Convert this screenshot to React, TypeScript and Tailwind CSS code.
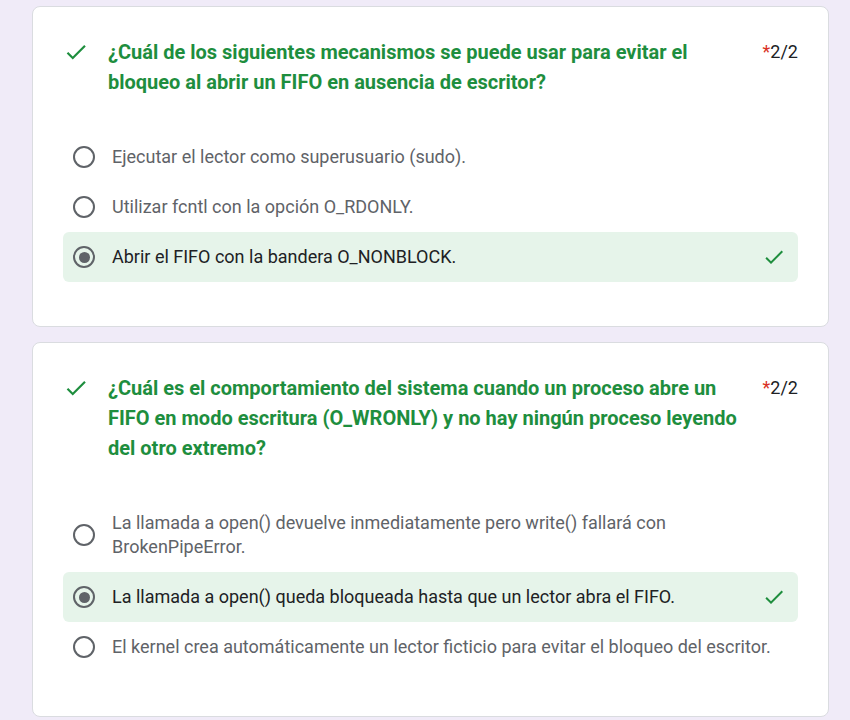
import type { ReactNode } from 'react'

type Option = { text: string; selected?: boolean }

type Question = {
  title: string
  options: Option[]
}

const QUESTIONS: Question[] = [
  {
    title: '¿Cuál de los siguientes mecanismos se puede usar para evitar el bloqueo al abrir un FIFO en ausencia de escritor?',
    options: [
      { text: 'Ejecutar el lector como superusuario (sudo).' },
      { text: 'Utilizar fcntl con la opción O_RDONLY.' },
      { text: 'Abrir el FIFO con la bandera O_NONBLOCK.', selected: true },
    ],
  },
  {
    title: '¿Cuál es el comportamiento del sistema cuando un proceso abre un FIFO en modo escritura (O_WRONLY) y no hay ningún proceso leyendo del otro extremo?',
    options: [
      { text: 'La llamada a open() devuelve inmediatamente pero write() fallará con BrokenPipeError.' },
      { text: 'La llamada a open() queda bloqueada hasta que un lector abra el FIFO.', selected: true },
      { text: 'El kernel crea automáticamente un lector ficticio para evitar el bloqueo del escritor.' },
    ],
  },
]

function Check({ className }: { className?: string }) {
  return (
    <svg viewBox="0 0 24 24" className={className} fill="currentColor">
      <path d="M9 16.17L4.83 12l-1.42 1.41L9 19 21 7l-1.41-1.41z" />
    </svg>
  )
}

function Radio({ checked }: { checked?: boolean }) {
  return (
    <div className="w-[22px] h-[22px] rounded-full border-2 border-[#5f6368] flex items-center justify-center shrink-0">
      {checked && <div className="w-[11px] h-[11px] rounded-full bg-[#5f6368]" />}
    </div>
  )
}

function Card({ children }: { children: ReactNode }) {
  return (
    <div className="bg-white rounded-lg border border-[#dadce0] px-[30px] pt-[30px] pb-[44px]">
      {children}
    </div>
  )
}

export default function App() {
  return (
    <div className="min-h-screen bg-[#f0ebf8] pl-[32px] pr-[21px] pt-[6px] pb-6 flex flex-col gap-[15px]" style={{ fontFamily: 'Roboto, "Liberation Sans", sans-serif' }}>
      {QUESTIONS.map((q, i) => (
        <Card key={i}>
          <div className="flex items-start">
            <Check className="w-[26px] h-[26px] text-[#1e8e3e] mt-[2px] shrink-0" />
            <h2 className="ml-[19px] flex-1 text-[20px] leading-[30px] font-bold text-[#1e8e3e] pr-[14px]">{q.title}</h2>
            <div className="text-[18px] leading-[30px] text-[#202124]">
              <span className="text-[#d93025]">*</span>2/2
            </div>
          </div>

          <div className="mt-[35px]">
            {q.options.map((o, j) => (
              <div
                key={j}
                className={`flex items-center py-[13px] pl-[10px] pr-3 rounded-md ${o.selected ? 'bg-[#e6f4ea]' : ''}`}
              >
                <Radio checked={o.selected} />
                <span className={`ml-[17px] flex-1 text-[18px] leading-[24px] ${o.selected ? 'text-[#202124]' : 'text-[#5f6368]'}`}>
                  {o.text}
                </span>
                {o.selected && <Check className="w-6 h-6 text-[#1e8e3e] shrink-0" />}
              </div>
            ))}
          </div>
        </Card>
      ))}
    </div>
  )
}
